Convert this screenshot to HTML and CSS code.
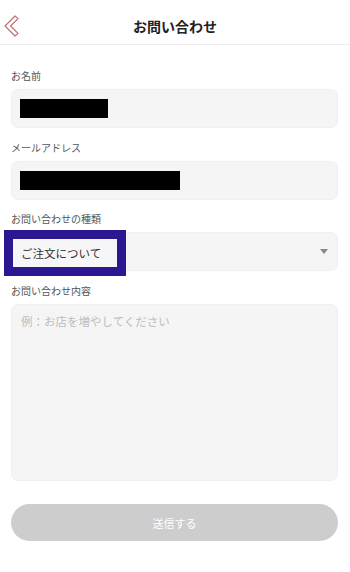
FILE: index.html
```html
<!DOCTYPE html>
<html lang="ja">
<head>
<meta charset="utf-8">
<link rel="stylesheet" href="styles.css">
</head>
<body>
<header class="header">
  <svg class="back" width="22" height="22" viewBox="0 0 22 22">
    <polygon points="13,1 16,3.6 8.6,11 16,18.4 13,21 3,11" fill="#fff" stroke="#c0706f" stroke-width="1.2" stroke-linejoin="round"/>
  </svg>
  <h1 class="title">お問い合わせ</h1>
</header>
<main class="form">
  <div class="field">
    <label class="label">お名前</label>
    <div class="input"><span class="redact redact-name"></span></div>
  </div>
  <div class="field">
    <label class="label">メールアドレス</label>
    <div class="input"><span class="redact redact-mail"></span></div>
  </div>
  <div class="field">
    <label class="label">お問い合わせの種類</label>
    <div class="input select">
      <span class="highlight"><span class="highlight-text">ご注文について</span></span>
      <span class="caret"></span>
    </div>
  </div>
  <div class="field">
    <label class="label">お問い合わせ内容</label>
    <div class="input textarea"><span class="placeholder">例：お店を増やしてください</span></div>
  </div>
  <button class="submit">送信する</button>
</main>
</body>
</html>
```
FILE: styles.css
```css
* { box-sizing: border-box; }
html, body { margin: 0; padding: 0; background: #fff; }
body {
  font-family: "Noto Sans CJK JP", "Noto Sans", sans-serif;
  color: #333;
  width: 350px;
}
.header {
  position: relative;
  height: 45px;
  border-bottom: 1px solid #ececec;
  display: flex;
  align-items: center;
  justify-content: center;
  padding-top: 8px;
}
.back {
  position: absolute;
  left: 2px;
  top: 15px;
}
.title {
  margin: 0;
  font-size: 14px;
  font-weight: 700;
  color: #222;
  line-height: 20px;
}
.form {
  padding: 23px 12px 0 11px;
  display: flex;
  flex-direction: column;
  gap: 11.5px;
}
.field {
  display: flex;
  flex-direction: column;
  gap: 5px;
}
.label {
  font-size: 10px;
  line-height: 16px;
  color: #555;
}
.input {
  position: relative;
  height: 39px;
  background: #f5f5f5;
  border: 1px solid #f0f0f0;
  border-radius: 7px;
  padding: 9px 8px;
  display: flex;
  align-items: flex-start;
}
.redact {
  display: block;
  height: 19px;
  background: #000;
}
.redact-name { width: 88px; }
.redact-mail { width: 160px; }
.select { align-items: center; justify-content: flex-end; padding-right: 9px; }
.highlight {
  position: absolute;
  left: -8px;
  top: -3px;
  width: 122px;
  height: 46px;
  border: 9px solid #2c1692;
  background: #f6f6f8;
  display: flex;
  align-items: center;
  padding-left: 8px;
}
.highlight-text {
  font-size: 11.5px;
  color: #333;
}
.caret {
  width: 0;
  height: 0;
  border-left: 4px solid transparent;
  border-right: 4px solid transparent;
  border-top: 5px solid #888;
}
.textarea {
  height: 177px;
  padding: 7px 9px;
}
.placeholder {
  font-size: 11.5px;
  color: #bdbdbd;
  line-height: 18px;
}
.submit {
  margin-top: 12px;
  height: 37px;
  border: none;
  border-radius: 19px;
  background: #cdcdcd;
  color: #fff;
  font-family: "Noto Sans CJK JP", "Noto Sans", sans-serif;
  font-size: 11px;
  width: 327px;
}
```
